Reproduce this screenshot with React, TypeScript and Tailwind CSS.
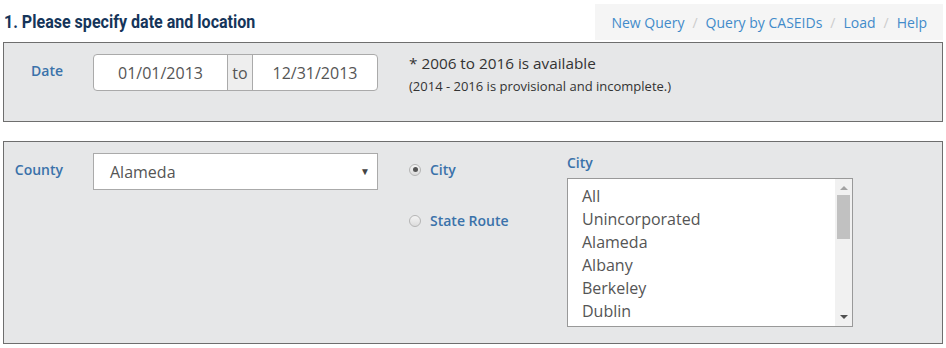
import React from 'react';

const cities = ['All', 'Unincorporated', 'Alameda', 'Albany', 'Berkeley', 'Dublin'];

function Radio({ checked, label }: { checked?: boolean; label: string }) {
  return (
    <label className="flex items-center gap-[9px] text-[14px] font-semibold text-[#3a72aa]">
      <span className="flex h-[12px] w-[12px] items-center justify-center rounded-full border border-[#b5b5b5] bg-gradient-to-b from-[#f4f4f4] to-[#dcdcdc]">
        {checked && <span className="h-[5px] w-[5px] rounded-full bg-[#555]" />}
      </span>
      {label}
    </label>
  );
}

export default function App() {
  return (
    <div className="h-[348px] w-[946px] overflow-hidden bg-white font-['Open_Sans',sans-serif] text-[#333]">
      {/* header */}
      <div className="flex h-[42px] items-start">
        <h1 className="ml-[4px] mt-[9px] origin-left scale-x-[0.845] whitespace-nowrap font-['Roboto',sans-serif] text-[19px] font-bold leading-[26px] text-[#15355a]">
          1. Please specify date and location
        </h1>
        <div className="ml-auto mr-[3px] mt-[4px] flex h-[36px] items-center bg-[#f5f5f5] px-[16px] text-[14px] text-[#428bca]">
          <span>New Query</span>
          <span className="px-[8px] text-[#ccc]">/</span>
          <span>Query by CASEIDs</span>
          <span className="px-[8px] text-[#ccc]">/</span>
          <span>Load</span>
          <span className="px-[8px] text-[#ccc]">/</span>
          <span>Help</span>
        </div>
      </div>

      {/* date panel */}
      <div className="mx-[3px] flex h-[80px] border border-[#6e6e6e] bg-[#e6e7e8] pt-[11px]">
        <div className="w-[59px] pt-[6px] text-right text-[14px] font-semibold text-[#3a72aa]">Date</div>
        <div className="ml-[30px] flex h-[37px] w-[285px] rounded-[4px] border border-[#aaa] bg-white text-[16px] text-[#555]">
          <div className="flex w-[133px] items-center justify-center">01/01/2013</div>
          <div className="flex w-[26px] items-center justify-center border-x border-[#aaa] bg-[#eee]">to</div>
          <div className="flex flex-1 items-center justify-center">12/31/2013</div>
        </div>
        <div className="ml-[31px] -mt-[1px]">
          <div className="text-[15.3px] leading-[20px]">* 2006 to 2016 is available</div>
          <div className="mt-[5px] text-[13px] leading-[17px]">(2014 - 2016 is provisional and incomplete.)</div>
        </div>
      </div>

      {/* location panel */}
      <div className="mx-[3px] mt-[19px] flex h-[203px] border border-[#6e6e6e] bg-[#e6e7e8] pt-[11px]">
        <div className="w-[59px] pt-[6px] text-right text-[14px] font-semibold text-[#3a72aa]">County</div>
        <div className="ml-[30px] flex h-[37px] w-[285px] items-center justify-between border border-[#aaa] bg-white pl-[16px] pr-[7px] text-[16px] text-[#555]">
          <span>Alameda</span>
          <span className="text-[10px] text-[#444]">▼</span>
        </div>
        <div className="ml-[31px] flex w-[158px] flex-col gap-[30px] pt-[6px]">
          <Radio checked label="City" />
          <Radio label="State Route" />
        </div>
        <div className="flex flex-col">
          <div className="text-[14px] font-semibold leading-[20px] text-[#3a72aa]">City</div>
          <div className="mt-[5px] flex h-[149px] w-[286px] border border-[#999] bg-white">
            <ul className="flex-1 pl-[14px] pt-[6px] text-[16px] leading-[23px] text-[#555]">
              {cities.map((c) => (
                <li key={c}>{c}</li>
              ))}
            </ul>
            <div className="flex w-[17px] flex-col items-center bg-[#f1f1f1]">
              <svg width="8" height="5" viewBox="0 0 8 5" className="mt-[6px]">
                <path d="M0 5 L4 1 L8 5 Z" fill="#a3a3a3" />
              </svg>
              <div className="mt-[5px] h-[44px] w-[13px] bg-[#c1c1c1]" />
              <div className="flex-1" />
              <svg width="8" height="5" viewBox="0 0 8 5" className="mb-[6px]">
                <path d="M0 0 L8 0 L4 4 Z" fill="#505050" />
              </svg>
            </div>
          </div>
        </div>
      </div>
    </div>
  );
}
